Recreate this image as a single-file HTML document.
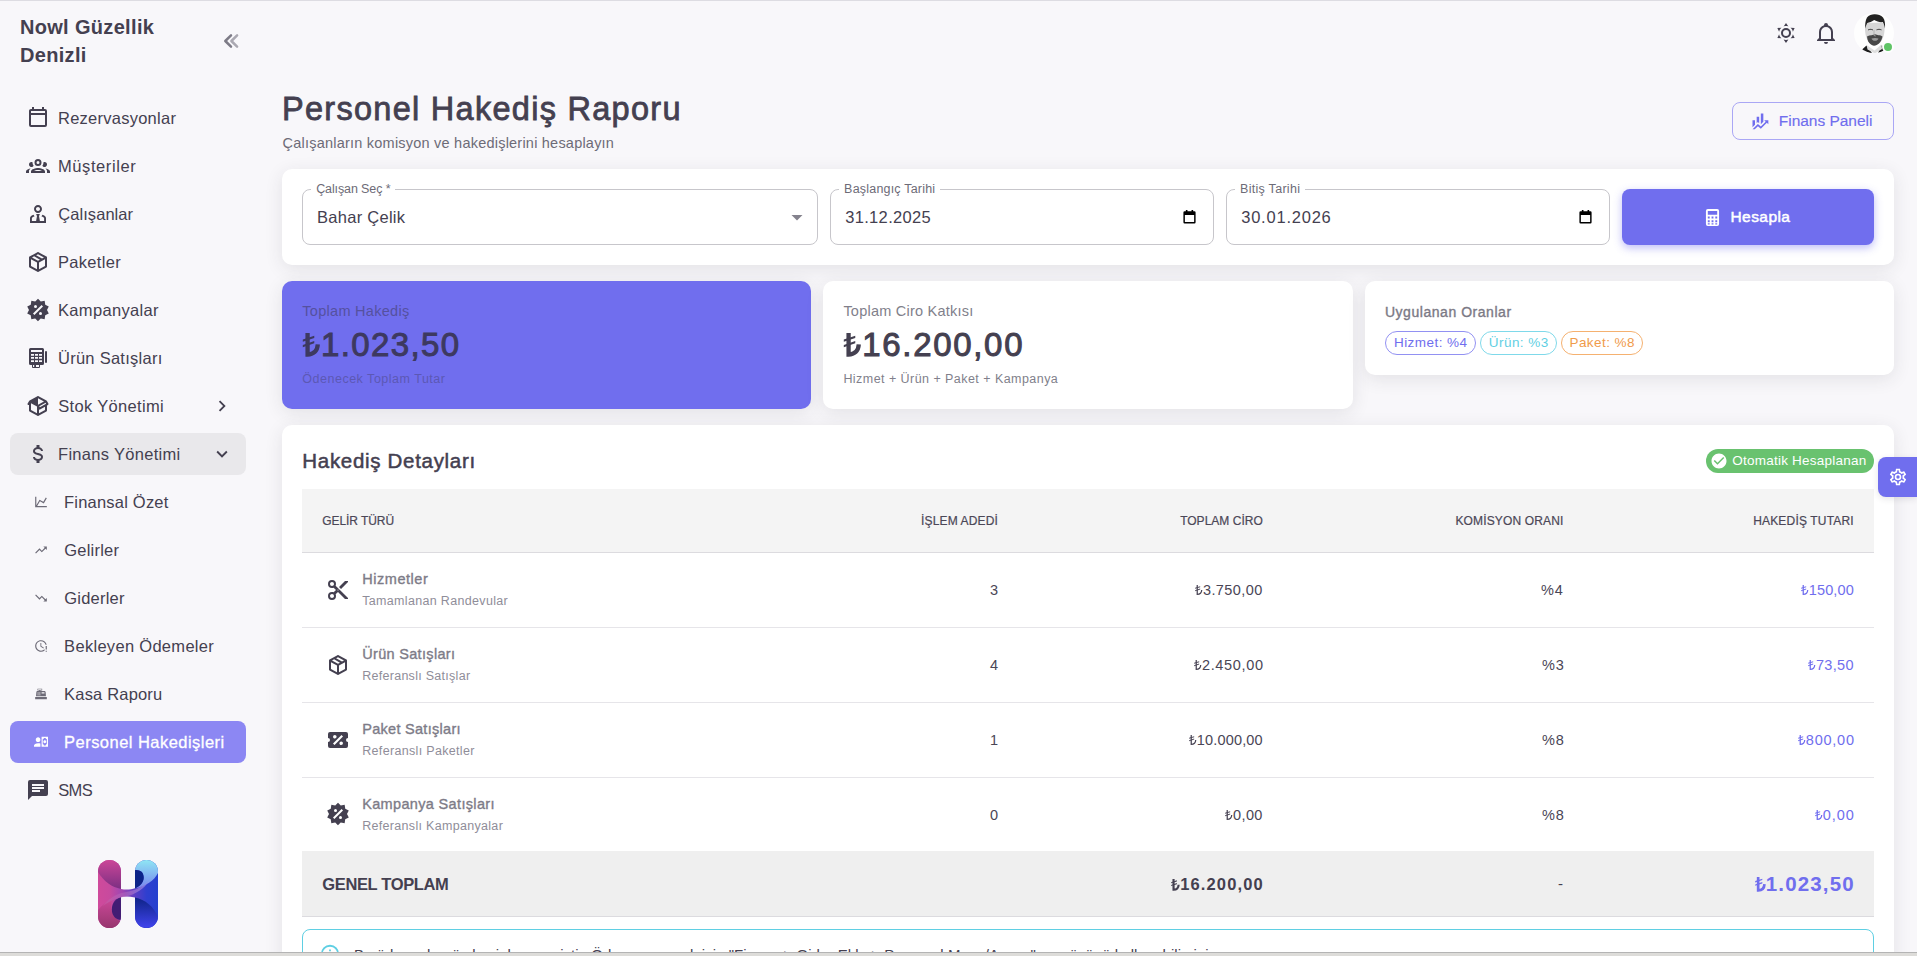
<!DOCTYPE html>
<html lang="tr">
<head>
<meta charset="utf-8">
<title>Personel Hakediş Raporu</title>
<style>
*{box-sizing:border-box;margin:0;padding:0}
html,body{width:1917px;height:956px;overflow:hidden}
body{font-family:"Liberation Sans",sans-serif;background:#f8f7fa;color:#444050;position:relative;font-size:15px}
.abs{position:absolute}
svg{display:block}
.t{position:absolute;white-space:nowrap;line-height:1}
/* top hairline */
#topline{left:0;top:0;width:1917px;height:1px;background:#dddce2}
#botbar{left:0;top:952px;width:1917px;height:4px;background:#dddcd9;border-top:1px solid #b4b4b4}
/* sidebar */
#brand{left:20px;top:13px;font-weight:bold;font-size:20px;line-height:28px;color:#444050;white-space:nowrap}
.mi{position:absolute;left:10px;width:236px;height:42px;border-radius:8px}
.mi .ic{position:absolute;left:16px;top:9px;width:24px;height:24px}
.mi .lb{position:absolute;left:48px;top:0;line-height:42px;font-size:16.5px;color:#444050;white-space:nowrap}
.mi.sub .ic{left:24px;top:14px;width:14px;height:14px}
.mi.sub .lb{left:54px}
.mi.open{background:#e9e8eb}
.mi.act{background:#8c87f3}
.mi.act .lb{color:#fff;-webkit-text-stroke-width:.3px}
.mi .ch{position:absolute;right:12.700px;top:10px;width:22px;height:22px}
/* cards */
.card{position:absolute;background:#fff;border-radius:10px;box-shadow:0 4px 18px rgba(47,43,61,.105)}

/* lira glyph */
.tl{display:inline-block;width:.54em;height:.695em;vertical-align:baseline;stroke-width:9;overflow:visible}
.b .tl{stroke-width:13.500}
.st-v .tl{stroke-width:13.500;width:.57em}
/* header */
#title{left:281.200px;top:90px;font-size:32.500px;-webkit-text-stroke-width:.8px;line-height:38px;color:#444050;white-space:nowrap}
#subtitle{left:282px;top:134px;font-size:14.5px;line-height:18px;color:#6d6b77;white-space:nowrap}
#finbtn{left:1732px;top:102px;width:162px;height:38px;border:1px solid #aaa7f5;border-radius:8px;color:#706eee;font-size:15.5px;-webkit-text-stroke-width:.15px}
#finbtn span{position:absolute;left:46px;top:0;line-height:36px;white-space:nowrap}
/* fields */
.fld{position:absolute;top:189px;height:56px;border:1px solid #c7c6cb;border-radius:8px}
.fld .lab{position:absolute;top:-8px;left:9px;padding:0 5px;background:#fff;font-size:12.5px;line-height:14px;color:#6d6b77;white-space:nowrap}
.fld .val{position:absolute;left:14px;top:0;line-height:54px;font-size:16.5px;color:#444050;white-space:nowrap}
#hesapla{left:1622px;top:189px;width:252px;height:56px;border-radius:8px;background:#706eee;box-shadow:0 3px 8px rgba(112,110,238,.45);color:#fff;-webkit-text-stroke-width:.5px;font-size:15.5px}
#hesapla span{position:absolute;left:108px;top:0;line-height:56px}
/* stat cards */
.st-l{position:absolute;left:20px;top:21px;font-size:14.5px;line-height:18px;white-space:nowrap}
.st-v{position:absolute;left:20px;top:43px;font-size:33px;line-height:42px;-webkit-text-stroke-width:1px;white-space:nowrap}
.st-s{position:absolute;left:20px;top:90px;font-size:12.5px;line-height:16px;white-space:nowrap}
.chip{position:absolute;top:50px;height:24px;border:1px solid;border-radius:12px;font-size:13.5px;line-height:22px;text-align:center;white-space:nowrap;letter-spacing:.45px;text-indent:.45px}

/* details */
#dtitle{left:20px;top:22px;font-size:20.5px;-webkit-text-stroke-width:.5px;line-height:28px;color:#444050;white-space:nowrap}
#auto{left:1424px;top:24px;width:168px;height:24px;border-radius:12px;background:#69c26f;color:#fff;font-size:13.5px;line-height:24px}
#auto span{position:absolute;left:26px;top:0;white-space:nowrap}
#thead{left:20px;top:64px;width:1572px;height:64px;background:#f4f4f4;border-bottom:1px solid #dcdbdf}
.th{position:absolute;top:1px;line-height:63px;font-size:12px;-webkit-text-stroke-width:.2px;color:#4b4757;white-space:nowrap}
.r{right:var(--r)}
.row{position:absolute;left:20px;width:1572px;height:75px;border-bottom:1px solid #e6e5e9}
.row .ic{position:absolute;left:24px;top:25px;width:24px;height:24px}
.row .t1{position:absolute;left:60px;top:16px;font-size:14.5px;line-height:20px;-webkit-text-stroke-width:.35px;color:#7d7b87;white-space:nowrap}
.row .t2{position:absolute;left:60px;top:40px;font-size:12.5px;line-height:16px;color:#8f8d99;white-space:nowrap}
.row .c{position:absolute;top:0;line-height:74px;font-size:14.5px;color:#4a4656;white-space:nowrap}
.row .p{color:#706eee}
#total{left:20px;top:426px;width:1572px;height:66px;background:#efefef;border-bottom:1px solid #dcdbdf}
#total .c{position:absolute;top:1px;line-height:64px;white-space:nowrap;font-weight:bold;color:#444050}
#alert{left:20px;top:504px;width:1572px;height:60px;border:1px solid #5fcfe3;border-radius:8px}
#gear{left:1878px;top:457px;width:39px;height:40px;border-radius:8px 0 0 8px;background:#706eee;box-shadow:0 2px 6px rgba(47,43,61,.12)}
</style>
<style id="tune">
#r3 .ic{top:24px}
/*TUNE*/
#brand{letter-spacing:0.33px;margin-left:-0.1px}
#m0 .lb{letter-spacing:0.25px;margin-left:0.0px}
#m1 .lb{letter-spacing:0.58px;margin-left:0.0px}
#m2 .lb{letter-spacing:0.07px;margin-left:0.2px}
#m3 .lb{letter-spacing:0.31px;margin-left:0.0px}
#m4 .lb{letter-spacing:0.34px;margin-left:0.0px}
#m5 .lb{letter-spacing:0.26px;margin-left:0.0px}
#m6 .lb{letter-spacing:0.33px;margin-left:0.2px}
#m7 .lb{letter-spacing:0.30px;margin-left:0.0px}
#m8 .lb{letter-spacing:0.20px;margin-left:0.1px}
#m9 .lb{letter-spacing:0.20px;margin-left:0.3px}
#m10 .lb{letter-spacing:0.20px;margin-left:0.3px}
#m11 .lb{letter-spacing:0.30px;margin-left:0.1px}
#m12 .lb{letter-spacing:0.18px;margin-left:0.1px}
#m13 .lb{letter-spacing:0.46px;margin-left:0.1px}
#m14 .lb{letter-spacing:-0.60px;margin-left:0.2px}
#title{letter-spacing:1.28px;margin-left:0.8px}
#subtitle{letter-spacing:0.22px;margin-left:0.6px}
#finbtn span{letter-spacing:-0.03px;margin-left:-0.2px}
#f1 .lab{letter-spacing:-0.12px;margin-left:-0.8px}
#f1 .val{letter-spacing:0.26px;margin-left:0.1px}
#f2 .lab{letter-spacing:0.20px;margin-left:-0.9px}
#f2 .val{letter-spacing:0.33px;margin-left:0.2px}
#f3 .lab{letter-spacing:0.29px;margin-left:-1.0px}
#f3 .val{letter-spacing:0.78px;margin-left:0.2px}
#hesapla span{letter-spacing:0.43px;margin-left:0.5px}
#s1 .st-l{letter-spacing:0.29px;margin-left:0.3px}
#s1 .st-v{letter-spacing:1.35px;margin-left:0.3px}
#s1 .st-s{letter-spacing:0.51px;margin-left:0.3px}
#s2 .st-l{letter-spacing:0.23px;margin-left:0.4px}
#s2 .st-v{letter-spacing:1.69px;margin-left:0.4px}
#s2 .st-s{letter-spacing:0.45px;margin-left:0.4px}
#s3 .st-l{letter-spacing:0.54px;margin-left:-0.1px}
#dtitle{letter-spacing:0.69px;margin-left:0.3px}
#auto span{letter-spacing:0.24px;margin-left:0.2px}
#thead .th:nth-of-type(1){letter-spacing:-0.07px;margin-left:0.3px}
#thead .th:nth-of-type(2){letter-spacing:0.14px;margin-right:-0.0px}
#thead .th:nth-of-type(3){letter-spacing:0.02px;margin-right:0.2px}
#thead .th:nth-of-type(4){letter-spacing:0.15px;margin-right:0.5px}
#thead .th:nth-of-type(5){letter-spacing:0.17px;margin-right:0.2px}
#r0 .t1{letter-spacing:0.55px;margin-left:0.2px}
#r0 .t2{letter-spacing:0.33px;margin-left:0.2px}
#r1 .t1{letter-spacing:0.32px;margin-left:0.2px}
#r1 .t2{letter-spacing:0.28px;margin-left:0.2px}
#r2 .t1{letter-spacing:0.29px;margin-left:0.2px}
#r2 .t2{letter-spacing:0.33px;margin-left:0.2px}
#r3 .t1{letter-spacing:0.34px;margin-left:0.2px}
#r3 .t2{letter-spacing:0.31px;margin-left:0.2px}
#r0 span:nth-of-type(4){letter-spacing:0.43px;margin-right:0.2px}
#r1 span:nth-of-type(4){letter-spacing:0.68px;margin-right:-0.8px}
#r2 span:nth-of-type(4){letter-spacing:0.16px;margin-right:0.2px}
#r3 span:nth-of-type(4){letter-spacing:0.40px;margin-right:0.2px}
#r0 span:nth-of-type(5){letter-spacing:0.80px;margin-right:0.5px}
#r1 span:nth-of-type(5){letter-spacing:0.80px;margin-right:-0.5px}
#r2 span:nth-of-type(5){letter-spacing:0.80px;margin-right:-0.5px}
#r3 span:nth-of-type(5){letter-spacing:0.80px;margin-right:-0.5px}
#r0 span:nth-of-type(6){letter-spacing:0.10px;margin-right:0.2px}
#r1 span:nth-of-type(6){letter-spacing:0.32px;margin-right:0.2px}
#r2 span:nth-of-type(6){letter-spacing:0.77px;margin-right:-0.8px}
#r3 span:nth-of-type(6){letter-spacing:0.95px;margin-right:-0.8px}
#total span:nth-of-type(1){letter-spacing:-0.36px;margin-left:0.3px}
#total span:nth-of-type(2){letter-spacing:1.13px;margin-right:-0.8px}
#total span:nth-of-type(4){letter-spacing:1.15px;margin-right:-0.8px}
/*ENDTUNE*/
</style>
</head>
<body>
<div class="abs" id="topline"></div>

<!-- SIDEBAR -->
<div class="abs" id="brand">Nowl Güzellik<br>Denizli</div>
<svg class="abs" id="collapse" style="left:222px;top:32px" width="18" height="18" viewBox="0 0 18 18" fill="none" stroke-width="2.500" stroke-linecap="round" stroke-linejoin="round"><path d="M9 3.400 3.300 9 9 14.600" stroke="#7d7b86"/><path d="M15.100 3.400 9.400 9l5.700 5.600" stroke="#aaa8b1"/></svg>

<div id="menu">
<div class="mi " id="m0" style="top:97px"><svg class="ic" viewBox="0 0 24 24" fill="#444050"><path d="M19,3H18V1H16V3H8V1H6V3H5C3.89,3 3,3.9 3,5V19A2,2 0 0,0 5,21H19A2,2 0 0,0 21,19V5A2,2 0 0,0 19,3M19,19H5V9H19V19M19,7H5V5H19V7Z"/></svg><span class="lb">Rezervasyonlar</span></div>
<div class="mi " id="m1" style="top:145px"><svg class="ic" viewBox="0 0 24 24" fill="#444050"><path d="M12,5A3.5,3.5 0 0,0 8.5,8.5A3.5,3.5 0 0,0 12,12A3.5,3.5 0 0,0 15.5,8.5A3.5,3.5 0 0,0 12,5M12,7A1.5,1.5 0 0,1 13.5,8.5A1.5,1.5 0 0,1 12,10A1.5,1.5 0 0,1 10.5,8.5A1.5,1.5 0 0,1 12,7M5.5,8A2.5,2.5 0 0,0 3,10.5C3,11.44 3.53,12.25 4.29,12.68C4.65,12.88 5.06,13 5.5,13C5.94,13 6.35,12.88 6.71,12.68C7.08,12.47 7.39,12.17 7.62,11.81C6.89,10.86 6.5,9.7 6.5,8.5C6.5,8.41 6.5,8.31 6.5,8.22C6.2,8.08 5.86,8 5.5,8M18.5,8C18.14,8 17.8,8.08 17.5,8.22C17.5,8.31 17.5,8.41 17.5,8.5C17.5,9.7 17.11,10.86 16.38,11.81C16.5,12 16.63,12.15 16.78,12.3C16.94,12.45 17.1,12.58 17.29,12.68C17.65,12.88 18.06,13 18.5,13C18.94,13 19.35,12.88 19.71,12.68C20.47,12.25 21,11.44 21,10.5A2.5,2.5 0 0,0 18.5,8M12,14C9.66,14 5,15.17 5,17.5V19H19V17.5C19,15.17 14.34,14 12,14M4.71,14.55C2.78,14.78 0,15.76 0,17.5V19H3V17.07C3,16.06 3.69,15.22 4.71,14.55M19.29,14.55C20.31,15.22 21,16.06 21,17.07V19H24V17.5C24,15.76 21.22,14.78 19.29,14.55M12,16C13.53,16 15.24,16.5 16.23,17H7.77C8.76,16.5 10.47,16 12,16Z"/></svg><span class="lb">Müşteriler</span></div>
<div class="mi " id="m2" style="top:193px"><svg class="ic" viewBox="0 0 24 24" fill="#444050"><path d="M16.36 12.76C18.31 13.42 20 14.5 20 16V21H4V16C4 14.5 5.69 13.42 7.65 12.76L8.27 14L8.5 14.5C7 14.96 5.9 15.56 5.9 16V19.1H10.12L11 14.03L10.06 12.15C10.68 12.08 11.33 12.03 12 12.03C12.67 12.03 13.32 12.08 13.94 12.15L13 14.03L13.88 19.1H18.1V16C18.1 15.56 17 14.96 15.5 14.5L15.73 14L16.36 12.76M12 5C10.9 5 10 5.9 10 7C10 8.1 10.9 9 12 9C13.1 9 14 8.1 14 7C14 5.9 13.1 5 12 5M12 11C9.79 11 8 9.21 8 7C8 4.79 9.79 3 12 3C14.21 3 16 4.79 16 7C16 9.21 14.21 11 12 11Z"/></svg><span class="lb">Çalışanlar</span></div>
<div class="mi " id="m3" style="top:241px"><svg class="ic" viewBox="0 0 24 24" fill="#444050"><path d="M21,16.5C21,16.88 20.79,17.21 20.47,17.38L12.57,21.82C12.41,21.94 12.21,22 12,22C11.79,22 11.59,21.94 11.43,21.82L3.53,17.38C3.21,17.21 3,16.88 3,16.5V7.5C3,7.12 3.21,6.79 3.53,6.62L11.43,2.18C11.59,2.06 11.79,2 12,2C12.21,2 12.41,2.06 12.57,2.18L20.47,6.62C20.79,6.79 21,7.12 21,7.5V16.5M12,4.15L10.11,5.22L16,8.61L17.96,7.5L12,4.15M6.04,7.5L12,10.85L13.96,9.75L8.08,6.35L6.04,7.5M5,15.91L11,19.29V12.58L5,9.21V15.91M19,15.91V9.21L13,12.58V19.29L19,15.91Z"/></svg><span class="lb">Paketler</span></div>
<div class="mi " id="m4" style="top:289px"><svg class="ic" viewBox="0 0 24 24" fill="#444050"><path d="M18.65,2.85L19.26,6.71L22.77,8.5L21,12L22.78,15.5L19.24,17.29L18.63,21.15L14.74,20.54L11.97,23.3L9.19,20.5L5.33,21.14L4.71,17.25L1.22,15.47L3,11.97L1.23,8.5L4.74,6.69L5.35,2.86L9.22,3.5L12,0.69L14.77,3.46L18.65,2.85M9.5,7A1.5,1.5 0 0,0 8,8.5A1.5,1.5 0 0,0 9.5,10A1.5,1.5 0 0,0 11,8.5A1.5,1.5 0 0,0 9.5,7M14.5,14A1.5,1.5 0 0,0 13,15.5A1.5,1.5 0 0,0 14.5,17A1.5,1.5 0 0,0 16,15.5A1.5,1.5 0 0,0 14.5,14M8.41,17L17,8.41L15.59,7L7,15.59L8.41,17Z"/></svg><span class="lb">Kampanyalar</span></div>
<div class="mi " id="m5" style="top:337px"><svg class="ic" viewBox="0 0 24 24" fill="#444050"><path fill-rule="evenodd" d="M4.500 2H16.500A1.500 1.500 0 0 1 18 3.500V17.500A1.500 1.500 0 0 1 16.500 19H14V21A1 1 0 0 1 13 22H7A1 1 0 0 1 6 21V19H4.500A1.500 1.500 0 0 1 3 17.500V3.500A1.500 1.500 0 0 1 4.500 2ZM5 4H16V6.100H5ZM5 8H8V9.8H5ZM9 8H12V9.8H9ZM13 8H16V9.8H13ZM5 11H8V12.8H5ZM9 11H12V12.8H9ZM13 11H16V12.8H13ZM5 14.2H8V16H5ZM9 14.2H12V16H9ZM13 14.2H16V16H13ZM7 19H8.200V20.900H7ZM10 19H13V20.900H10ZM20 5A1 1 0 0 1 21 6V16A1 1 0 0 1 19 16V6A1 1 0 0 1 20 5Z"/></svg><span class="lb">Ürün Satışları</span></div>
<div class="mi " id="m6" style="top:385px"><svg class="ic" viewBox="0 0 24 24" fill="#444050"><path d="M2,10.96C1.5,10.68 1.35,10.07 1.63,9.59L3.13,7C3.24,6.8 3.41,6.66 3.6,6.58L11.43,2.18C11.59,2.06 11.79,2 12,2C12.21,2 12.41,2.06 12.57,2.18L20.47,6.62C20.66,6.72 20.82,6.88 20.91,7.08L22.36,9.6C22.64,10.08 22.47,10.69 22,10.96L21,11.54V16.5C21,16.88 20.79,17.21 20.47,17.38L12.57,21.82C12.41,21.94 12.21,22 12,22C11.79,22 11.59,21.94 11.43,21.82L3.53,17.38C3.21,17.21 3,16.88 3,16.5V10.96C2.7,11.13 2.32,11.14 2,10.96M12,4.15V10.85L17.96,7.5L12,4.15M5,15.91L11,19.29V12.58L5,9.21V15.91M19,15.91V12.69L14,15.59C13.67,15.77 13.3,15.76 13,15.6V19.29L19,15.91M13.85,13.36L20.13,9.73L19.55,8.72L13.27,12.35L13.85,13.36Z"/></svg><span class="lb">Stok Yönetimi</span><svg class="ch" viewBox="0 0 24 24" fill="#444050"><path d="M8.59,16.58L13.17,12L8.59,7.41L10,6L16,12L10,18L8.59,16.58Z"/></svg></div>
<div class="mi open" id="m7" style="top:433px"><svg class="ic" viewBox="0 0 24 24" fill="#444050"><path d="M7,15H9C9,16.08 10.37,17 12,17C13.63,17 15,16.08 15,15C15,13.9 13.96,13.5 11.76,12.97C9.64,12.44 7,11.78 7,9C7,7.21 8.47,5.69 10.5,5.18V3H13.5V5.18C15.53,5.69 17,7.21 17,9H15C15,7.92 13.63,7 12,7C10.37,7 9,7.92 9,9C9,10.1 10.04,10.5 12.24,11.03C14.36,11.56 17,12.22 17,15C17,16.79 15.53,18.31 13.5,18.82V21H10.5V18.82C8.47,18.31 7,16.79 7,15Z"/></svg><span class="lb">Finans Yönetimi</span><svg class="ch" viewBox="0 0 24 24" fill="#444050"><path d="M7.41,8.58L12,13.17L16.59,8.58L18,10L12,16L6,10L7.41,8.58Z"/></svg></div>
<div class="mi sub" id="m8" style="top:481px"><svg class="ic" viewBox="0 0 24 24" fill="#6d6b77"><path d="M16,11.78L20.24,4.45L21.97,5.45L16.74,14.5L10.23,10.75L5.46,19H22V21H2V3H4V17.54L9.5,8L16,11.78Z"/></svg><span class="lb">Finansal Özet</span></div>
<div class="mi sub" id="m9" style="top:529px"><svg class="ic" viewBox="0 0 24 24" fill="#6d6b77"><path d="M16,6L18.29,8.29L13.41,13.17L9.41,9.17L2,16.59L3.41,18L9.41,12L13.41,16L19.71,9.71L22,12V6H16Z"/></svg><span class="lb">Gelirler</span></div>
<div class="mi sub" id="m10" style="top:577px"><svg class="ic" viewBox="0 0 24 24" fill="#6d6b77"><path d="M16,18L18.29,15.71L13.41,10.83L9.41,14.83L2,7.41L3.41,6L9.41,12L13.41,8L19.71,14.29L22,12V18H16Z"/></svg><span class="lb">Giderler</span></div>
<div class="mi sub" id="m11" style="top:625px"><svg class="ic" viewBox="0 0 24 24" fill="#6d6b77"><path d="M11,7V13L16.2,16.1L17,14.9L12.5,12.2V7H11M20,12V18H22V12H20M20,20V22H22V20H20M18,20C16.3,21.3 14.3,22 12,22C6.5,22 2,17.5 2,12C2,6.5 6.5,2 12,2C16.8,2 20.9,5.4 21.8,10H19.7C18.8,6.6 15.7,4 12,4C7.6,4 4,7.6 4,12C4,16.4 7.6,20 12,20C14.4,20 16.5,18.9 18,17.3V20Z"/></svg><span class="lb">Bekleyen Ödemeler</span></div>
<div class="mi sub" id="m12" style="top:673px"><svg class="ic" viewBox="0 0 24 24" fill="#6d6b77"><path d="M2,17H22V21H2V17M6.25,7H9V6H6V3H14V6H11V7H17.8C18.8,7 19.8,8 20,9L20.5,16H3.5L4.05,9C4.05,8 5.05,7 6.25,7M13,9V11H18V9H13M6,9V10H8V9H6M9,9V10H11V9H9M6,11V12H8V11H6M9,11V12H11V11H9M6,13V14H8V13H6M9,13V14H11V13H9M7,4V5H13V4H7Z"/></svg><span class="lb">Kasa Raporu</span></div>
<div class="mi sub act" id="m13" style="top:721px"><svg class="ic" viewBox="0 0 24 24" fill="#fff"><path d="M11 8C11 10.21 9.21 12 7 12C4.79 12 3 10.21 3 8C3 5.79 4.79 4 7 4C9.21 4 11 5.79 11 8M11 14.72V20H0V18C0 15.79 3.13 14 7 14C8.5 14 9.87 14.27 11 14.72M24 20H13V3H24V20M16 11.5C16 10.12 17.12 9 18.5 9C19.88 9 21 10.12 21 11.5C21 12.88 19.88 14 18.5 14C17.12 14 16 12.88 16 11.5M22 7C20.9 7 20 6.11 20 5H17C17 6.11 16.11 7 15 7V16C16.11 16 17 16.9 17 18H20C20 16.9 20.9 16 22 16V7Z"/></svg><span class="lb">Personel Hakedişleri</span></div>
<div class="mi " id="m14" style="top:769px"><svg class="ic" viewBox="0 0 24 24" fill="#444050"><path d="M20,2H4A2,2 0 0,0 2,4V22L6,18H20A2,2 0 0,0 22,16V4A2,2 0 0,0 20,2M6,9H18V11H6M14,14H6V12H14M18,8H6V6H18"/></svg><span class="lb">SMS</span></div>
</div>

<svg class="abs" id="logo" style="left:98px;top:860px" width="60" height="68" viewBox="0 0 60 68">
<defs>
<linearGradient id="lgL" x1="0" y1="0" x2="1" y2="0"><stop offset="0" stop-color="#cf4a9b"/><stop offset=".5" stop-color="#c84a9e"/><stop offset="1" stop-color="#a247b2"/></linearGradient>
<linearGradient id="lgL2" x1="0" y1="0" x2="0" y2="1"><stop offset="0" stop-color="#cb4698"/><stop offset="1" stop-color="#7b2f82"/></linearGradient>
<linearGradient id="lgL3" x1="0" y1="0" x2="0" y2="1"><stop offset="0" stop-color="#cb4899"/><stop offset="1" stop-color="#97366e"/></linearGradient>
<linearGradient id="lgR" x1="0" y1="0" x2="1" y2="0"><stop offset="0" stop-color="#5a3fc4"/><stop offset=".5" stop-color="#2f3fcf"/><stop offset="1" stop-color="#2440cf"/></linearGradient>
<linearGradient id="lgR2" x1="0" y1="0" x2="0" y2="1"><stop offset="0" stop-color="#8fe6f4"/><stop offset="1" stop-color="#7785ee"/></linearGradient>
<linearGradient id="lgR3" x1="0" y1="0" x2="0" y2="1"><stop offset="0" stop-color="#0d2386"/><stop offset="1" stop-color="#4043ec"/></linearGradient>
<linearGradient id="lgX" x1="0" y1="0" x2="1" y2="0"><stop offset="0" stop-color="#a847b0"/><stop offset="1" stop-color="#5a3fc4"/></linearGradient>
<linearGradient id="lgRib" x1="0" y1="0" x2="1" y2="0"><stop offset="0" stop-color="#c95aa2"/><stop offset=".5" stop-color="#a860bd"/><stop offset="1" stop-color="#8b92ee"/></linearGradient>
<clipPath id="cpL"><rect x="0" y="0" width="23" height="68" rx="11.500"/></clipPath>
<clipPath id="cpR"><rect x="37" y="0" width="23" height="68" rx="11.500"/></clipPath>
</defs>
<g clip-path="url(#cpL)"><rect x="0" y="0" width="23" height="68" fill="url(#lgL)"/><path d="M0 12C6 22 14 27 23 29V0H0z" fill="url(#lgL2)"/><path d="M0 50c4-5 9-9 14-11-1 4-1 9 0 13 2 5 5 8 9 9v7H0z" fill="url(#lgL3)"/><path d="M23 37c-7 2-10 8-9 15 1 5 5 8 9 8z" fill="#421d74"/></g>
<g clip-path="url(#cpR)"><rect x="37" y="0" width="23" height="68" fill="url(#lgR)"/><path d="M37 10V0h23v13c-4 8-12 13-23 15.500 8-4 10-9.500 8-14.500-1-3-4-4-8-4z" fill="url(#lgR2)"/><path d="M37 10c4 0 7 1 8 4 2 5 0 11-8 14.500z" fill="#0c2388"/><path d="M37 37.500c10 2 19 9 23 20v10H37z" fill="url(#lgR3)"/></g>
<path d="M23 29c5 1 10 .600 14-.700v9.200c-5-1-10-1.200-14-.500z" fill="url(#lgX)"/>
<path d="M5 46c5-7 12-11.500 21-13.500 9-1.500 18-5 25-11.500-5 8-13 13-23 15.500-9 1.500-16 4-23 9.500z" fill="url(#lgRib)" opacity=".75"/>
</svg>

<!-- MAIN -->
<svg width="0" height="0" style="position:absolute"><defs><g id="lira"><path d="M15 0V67.500C33 67.500 46 57 47 36" fill="none" stroke="currentColor"/><path d="M0 20.500 36 8.500V15.500L0 27.500zM0 37.500 36 25.500V32.500L0 44.500z" fill="currentColor" stroke="none"/></g></defs></svg>
<div id="main">
<!-- header icons -->
<svg class="abs" id="sun" style="left:1774px;top:21px" width="24" height="24" viewBox="0 0 24 24" fill="#444050"><path d="M12,7A5,5 0 0,1 17,12A5,5 0 0,1 12,17A5,5 0 0,1 7,12A5,5 0 0,1 12,7M12,9A3,3 0 0,0 9,12A3,3 0 0,0 12,15A3,3 0 0,0 15,12A3,3 0 0,0 12,9M12,2L14.39,5.42C13.65,5.15 12.84,5 12,5C11.16,5 10.35,5.15 9.61,5.42L12,2M3.34,7L7.5,6.65C6.9,7.16 6.36,7.78 5.94,8.5C5.5,9.24 5.25,10 5.11,10.79L3.34,7M3.36,17L5.12,13.23C5.26,14 5.53,14.78 5.95,15.5C6.37,16.24 6.91,16.86 7.5,17.37L3.36,17M20.65,7L18.88,10.79C18.74,10 18.47,9.23 18.05,8.5C17.63,7.78 17.1,7.15 16.5,6.64L20.65,7M20.64,17L16.5,17.36C17.09,16.85 17.62,16.22 18.04,15.5C18.46,14.77 18.73,14 18.87,13.21L20.64,17M12,22L9.59,18.56C10.33,18.83 11.14,19 12,19C12.82,19 13.63,18.83 14.37,18.56L12,22Z"/></svg>
<svg class="abs" id="bell" style="left:1814px;top:21px" width="24" height="24" viewBox="0 0 24 24" fill="#444050"><path d="M10,21H14A2,2 0 0,1 12,23A2,2 0 0,1 10,21M21,19V20H3V19L5,17V11C5,7.9 7.03,5.17 10,4.29C10,4.19 10,4.1 10,4A2,2 0 0,1 12,2A2,2 0 0,1 14,4C14,4.1 14,4.19 14,4.29C16.97,5.17 19,7.9 19,11V17L21,19M17,11A5,5 0 0,0 12,6A5,5 0 0,0 7,11V18H17V11Z"/></svg>
<svg class="abs" id="avatar" style="left:1854px;top:13px" width="40" height="40" viewBox="0 0 40 40"><defs><clipPath id="avc"><circle cx="20" cy="20" r="20"/></clipPath><filter id="avb" x="-10%" y="-10%" width="120%" height="120%"><feGaussianBlur stdDeviation=".45"/></filter></defs><g clip-path="url(#avc)"><rect width="40" height="40" fill="#fefefe"/><g filter="url(#avb)">
<path d="M7 37.500 12.500 32.500 18 40H7zM29.300 33 29.800 38.500 24 40.500 27 32.500z" fill="#1c1c1c"/>
<path d="M12.500 32 20.500 37.500 27.500 31.500 28 36 21 40.500 13.500 36.500z" fill="#dedede"/>
<path d="M11.500 10C11 13 10.800 16 11.200 19c.300 3 1 5.500 2.300 8 1.500 2.500 3.500 4.500 6.500 5.500 3-.300 6-2 8-5.500 1.500-3 2.300-6 2.500-9.500.200-3 0-5.500-.500-8z" fill="#d6d6d6"/>
<path d="M13 23.500c1.500-.800 3-1.300 4.500-1.300l3.500-1 3.500 1c1.500 0 3 .500 4 1.300-.500 2.500-1.500 5-3.500 7-1.500 1.300-3 2-5 2.200-2.500-.500-4.500-2-5.800-4.200-.700-1.500-1-3.300-1.200-5z" fill="#474747"/>
<path d="M17.500 25.500c2-.700 5-.700 7 0-.500 1.500-2 2.300-3.500 2.300s-3-.800-3.500-2.300z" fill="#9a9a9a"/>
<path d="M14 16.300c1.500-.900 3.500-.900 5 0v1.200c-1.500-.600-3.500-.600-5 0zM22.500 16.300c1.500-.900 3.500-.900 5 0v1.200c-1.500-.600-3.500-.600-5 0z" fill="#5a5a5a"/>
<path d="M20 17v5.500l1.800.500" fill="none" stroke="#aaa" stroke-width=".8"/>
<path d="M11.300 15.500C11 11 11.500 7 13 4.500 15 2 18 1.200 21 1.300c3 .200 6 1 8 3.200 1.800 2.200 2.300 6 2 11-.500-2.500-1-5-2.300-6.500-2.500.500-6-.500-8.500-2-2 1.500-5 2.500-7 3-.800 1.500-1.400 3.500-1.900 5.500z" fill="#222"/>
</g></g></svg>
<div class="abs" style="left:1882px;top:41px;width:12px;height:12px;border-radius:50%;background:#5fc466;border:2px solid #fdfdfe"></div>

<div class="abs" id="title">Personel Hakediş Raporu</div>
<div class="abs" id="subtitle">Çalışanların komisyon ve hakedişlerini hesaplayın</div>
<div class="abs" id="finbtn"><svg class="abs" style="left:16.500px;top:8px" width="20" height="20" viewBox="0 0 24 24" fill="#706eee"><path d="M6,16.5L3,19.44V11H6M11,14.66L9.43,13.32L8,14.64V7H11M16,13L13,16V3H16M18.81,12.81L17,11H22V16L20.21,14.21L13,21.36L9.53,18.34L5.75,22H3L9.47,15.66L13,18.64"/></svg><span>Finans Paneli</span></div>

<!-- filter card -->
<div class="card" id="fcard" style="left:282px;top:169px;width:1612px;height:96px"></div>
<div class="fld" id="f1" style="left:302px;width:516px"><span class="lab">Çalışan Seç *</span><span class="val">Bahar Çelik</span><svg class="abs" style="right:14px;top:24.800px" width="12" height="6" viewBox="0 0 12 6" fill="#84828d"><path d="M0.500 0h11L6 5.500z"/></svg></div>
<div class="fld" id="f2" style="left:830px;width:384px"><span class="lab">Başlangıç Tarihi</span><span class="val">31.12.2025</span><svg class="abs cali" style="right:17.200px;top:19.500px" width="13" height="14" viewBox="0 0 16 17" fill="#000"><path d="M3.500 0h2v1.500h5V0h2v1.500H14a1.500 1.500 0 0 1 1.500 1.500v12A1.500 1.500 0 0 1 14 16.500H2A1.500 1.500 0 0 1 .500 15V3A1.500 1.500 0 0 1 2 1.500h1.500zM2.300 6v8.700h11.400V6z"/></svg></div>
<div class="fld" id="f3" style="left:1226px;width:384px"><span class="lab">Bitiş Tarihi</span><span class="val">30.01.2026</span><svg class="abs cali" style="right:17.200px;top:19.500px" width="13" height="14" viewBox="0 0 16 17" fill="#000"><path d="M3.500 0h2v1.500h5V0h2v1.500H14a1.500 1.500 0 0 1 1.500 1.500v12A1.500 1.500 0 0 1 14 16.500H2A1.500 1.500 0 0 1 .500 15V3A1.500 1.500 0 0 1 2 1.500h1.500zM2.300 6v8.700h11.400V6z"/></svg></div>
<div class="abs" id="hesapla"><svg class="abs" style="left:82.500px;top:19.500px" width="15" height="17" viewBox="0 0 16 18" fill="#fff"><path d="M3 0h10a2 2 0 0 1 2 2v14a2 2 0 0 1-2 2H3a2 2 0 0 1-2-2V2a2 2 0 0 1 2-2m0 2v4h10V2zm0 6v2h2V8zm4 0v2h2V8zm4 0v2h2V8zm-8 4v2h2v-2zm4 0v2h2v-2zm4 0v2h2v-2zm-8 3.200V16.500h2v-1.300zm4 0v1.300h2v-1.300zm4 0v1.300h2v-1.300z"/></svg><span>Hesapla</span></div>

<!-- stat cards -->
<div class="card" id="s1" style="left:282px;top:281px;width:529px;height:128px;background:#706eee"><div class="st-l" style="color:#55519f">Toplam Hakediş</div><div class="st-v" style="color:#3d3960"><svg class="tl" viewBox="0 0 54 72"><use href="#lira"/></svg>1.023,50</div><div class="st-s" style="color:#5c58b4">Ödenecek Toplam Tutar</div></div>
<div class="card" id="s2" style="left:823px;top:281px;width:530px;height:128px"><div class="st-l" style="color:#817f8b">Toplam Ciro Katkısı</div><div class="st-v" style="color:#444050"><svg class="tl" viewBox="0 0 54 72"><use href="#lira"/></svg>16.200,00</div><div class="st-s" style="color:#817f8b">Hizmet + Ürün + Paket + Kampanya</div></div>
<div class="card" id="s3" style="left:1365px;top:281px;width:529px;height:94px"><div class="st-l" style="color:#7b7985;-webkit-text-stroke-width:.35px;font-size:14px;top:22px">Uygulanan Oranlar</div>
<div class="chip" style="left:20px;width:91px;color:#706eee;border-color:#9291f2">Hizmet: %4</div>
<div class="chip" style="left:115px;width:77px;color:#5fcfe3;border-color:#7fd9ea">Ürün: %3</div>
<div class="chip" style="left:196px;width:82px;color:#f09b4b;border-color:#f5b170">Paket: %8</div>
</div>
<!-- details card -->
<div class="card" id="dcard" style="left:282px;top:425px;width:1612px;height:600px">
<div class="abs" id="dtitle">Hakediş Detayları</div>
<div class="abs" id="auto"><svg class="abs" style="left:4px;top:3px" width="18" height="18" viewBox="0 0 24 24" fill="#fff"><path d="M12 2C6.500 2 2 6.500 2 12S6.500 22 12 22 22 17.500 22 12 17.500 2 12 2M10 17L5 12L6.410 10.590L10 14.170L17.590 6.580L19 8L10 17Z"/></svg><span>Otomatik Hesaplanan</span></div>
<div class="abs" id="thead"><span class="th" style="left:20px">GELİR TÜRÜ</span><span class="th" style="right:876px">İŞLEM ADEDİ</span><span class="th" style="right:611px">TOPLAM CİRO</span><span class="th" style="right:310px">KOMİSYON ORANI</span><span class="th" style="right:20px">HAKEDİŞ TUTARI</span></div>
<div class="row" id="r0" style="top:128px"><svg class="ic" viewBox="0 0 24 24" fill="#444050"><path d="M19,3L13,9L15,11L22,4V3M12,12.5A0.5,0.5 0 0,1 11.5,12A0.5,0.5 0 0,1 12,11.5A0.5,0.5 0 0,1 12.5,12A0.5,0.5 0 0,1 12,12.5M6,20A2,2 0 0,1 4,18C4,16.89 4.9,16 6,16A2,2 0 0,1 8,18C8,19.11 7.1,20 6,20M6,8A2,2 0 0,1 4,6C4,4.89 4.9,4 6,4A2,2 0 0,1 8,6C8,7.11 7.1,8 6,8M9.64,7.64C9.87,7.14 10,6.59 10,6A4,4 0 0,0 6,2A4,4 0 0,0 2,6A4,4 0 0,0 6,10C6.59,10 7.14,9.87 7.64,9.64L10,12L7.64,14.36C7.14,14.13 6.59,14 6,14A4,4 0 0,0 2,18A4,4 0 0,0 6,22A4,4 0 0,0 10,18C10,17.41 9.87,16.86 9.64,16.36L12,14L19,21H22V20L9.64,7.640Z"/></svg><span class="t1">Hizmetler</span><span class="t2">Tamamlanan Randevular</span><span class="c" style="right:876px">3</span><span class="c" style="right:611px"><svg class="tl" viewBox="0 0 54 72"><use href="#lira"/></svg>3.750,00</span><span class="c" style="right:310px">%4</span><span class="c p" style="right:20px"><svg class="tl" viewBox="0 0 54 72"><use href="#lira"/></svg>150,00</span></div>
<div class="row" id="r1" style="top:203px"><svg class="ic" viewBox="0 0 24 24" fill="#444050"><path d="M21,16.5C21,16.88 20.79,17.21 20.47,17.38L12.57,21.82C12.41,21.94 12.21,22 12,22C11.79,22 11.59,21.94 11.43,21.82L3.53,17.38C3.21,17.21 3,16.88 3,16.5V7.5C3,7.12 3.21,6.79 3.53,6.62L11.43,2.18C11.59,2.06 11.79,2 12,2C12.21,2 12.41,2.06 12.57,2.18L20.47,6.62C20.79,6.79 21,7.12 21,7.5V16.5M12,4.15L10.11,5.22L16,8.61L17.96,7.5L12,4.15M6.04,7.5L12,10.85L13.96,9.75L8.08,6.35L6.04,7.5M5,15.91L11,19.29V12.58L5,9.21V15.91M19,15.91V9.21L13,12.58V19.29L19,15.91Z"/></svg><span class="t1">Ürün Satışları</span><span class="t2">Referanslı Satışlar</span><span class="c" style="right:876px">4</span><span class="c" style="right:611px"><svg class="tl" viewBox="0 0 54 72"><use href="#lira"/></svg>2.450,00</span><span class="c" style="right:310px">%3</span><span class="c p" style="right:20px"><svg class="tl" viewBox="0 0 54 72"><use href="#lira"/></svg>73,50</span></div>
<div class="row" id="r2" style="top:278px"><svg class="ic" viewBox="0 0 24 24" fill="#444050"><path d="M4,4A2,2 0 0,0 2,6V10A2,2 0 0,1 4,12A2,2 0 0,1 2,14V18A2,2 0 0,0 4,20H20A2,2 0 0,0 22,18V14A2,2 0 0,1 20,12A2,2 0 0,1 22,10V6A2,2 0 0,0 20,4H4M15.5,7L17,8.5L8.5,17L7,15.5L15.5,7M8.81,7.04C9.79,7.04 10.58,7.83 10.58,8.81A1.77,1.77 0 0,1 8.810,10.58C7.83,10.58 7.04,9.79 7.04,8.81A1.77,1.77 0 0,1 8.810,7.04M15.19,13.42C16.17,13.42 16.96,14.21 16.96,15.19A1.77,1.77 0 0,1 15.19,16.96C14.21,16.96 13.42,16.17 13.42,15.19A1.77,1.77 0 0,1 15.19,13.420Z"/></svg><span class="t1">Paket Satışları</span><span class="t2">Referanslı Paketler</span><span class="c" style="right:876px">1</span><span class="c" style="right:611px"><svg class="tl" viewBox="0 0 54 72"><use href="#lira"/></svg>10.000,00</span><span class="c" style="right:310px">%8</span><span class="c p" style="right:20px"><svg class="tl" viewBox="0 0 54 72"><use href="#lira"/></svg>800,00</span></div>
<div class="row" id="r3" style="top:353px"><svg class="ic" viewBox="0 0 24 24" fill="#444050"><path d="M18.65,2.85L19.26,6.71L22.77,8.5L21,12L22.78,15.5L19.24,17.29L18.63,21.15L14.74,20.54L11.97,23.3L9.19,20.5L5.33,21.14L4.71,17.25L1.22,15.47L3,11.97L1.23,8.5L4.74,6.69L5.35,2.86L9.22,3.5L12,0.69L14.77,3.46L18.65,2.85M9.5,7A1.5,1.5 0 0,0 8,8.5A1.5,1.5 0 0,0 9.5,10A1.5,1.5 0 0,0 11,8.5A1.5,1.5 0 0,0 9.5,7M14.5,14A1.5,1.5 0 0,0 13,15.5A1.5,1.5 0 0,0 14.5,17A1.5,1.5 0 0,0 16,15.5A1.5,1.5 0 0,0 14.5,14M8.41,17L17,8.41L15.59,7L7,15.59L8.41,17Z"/></svg><span class="t1">Kampanya Satışları</span><span class="t2">Referanslı Kampanyalar</span><span class="c" style="right:876px">0</span><span class="c" style="right:611px"><svg class="tl" viewBox="0 0 54 72"><use href="#lira"/></svg>0,00</span><span class="c" style="right:310px">%8</span><span class="c p" style="right:20px"><svg class="tl" viewBox="0 0 54 72"><use href="#lira"/></svg>0,00</span></div>
<div class="abs b" id="total"><span class="c" style="left:20px;font-size:16.5px">GENEL TOPLAM</span><span class="c" style="right:611px;font-size:16.5px"><svg class="tl" viewBox="0 0 54 72"><use href="#lira"/></svg>16.200,00</span><span class="c" style="right:311px;font-size:15px;font-weight:normal">-</span><span class="c" style="right:20px;font-size:20.5px;color:#706eee"><svg class="tl" viewBox="0 0 54 72"><use href="#lira"/></svg>1.023,50</span></div>
<div class="abs" id="alert"><svg class="abs" style="left:16px;top:13px" width="22" height="22" viewBox="0 0 24 24" fill="#5fcfe3"><path d="M11,9H13V7H11M12,20C7.59,20 4,16.41 4,12C4,7.59 7.59,4 12,4C16.41,4 20,7.59 20,12C20,16.41 16.41,20 12,20M12,2A10,10 0 0,0 2,12A10,10 0 0,0 12,22A10,10 0 0,0 22,12A10,10 0 0,0 12,2M11,17H13V11H11V17Z"/></svg><span class="t" style="left:51px;top:17px;font-size:15px;letter-spacing:.04px;color:#444050">Bu ödeme henüz kesinleşmemiştir. Ödeme yapmak için "Finans > Gider Ekle > Personel Maaş/Avans" menüsünü kullanabilirsiniz.</span></div>
</div>
<div class="abs" id="gear"><svg class="abs" style="left:10px;top:10px" width="20" height="20" viewBox="0 0 24 24" fill="#fff"><path d="M12,8A4,4 0 0,1 16,12A4,4 0 0,1 12,16A4,4 0 0,1 8,12A4,4 0 0,1 12,8M12,10A2,2 0 0,0 10,12A2,2 0 0,0 12,14A2,2 0 0,0 14,12A2,2 0 0,0 12,10M10,22C9.75,22 9.54,21.82 9.5,21.58L9.13,18.93C8.5,18.68 7.96,18.34 7.44,17.94L4.95,18.95C4.73,19.03 4.46,18.95 4.34,18.73L2.34,15.27C2.21,15.05 2.27,14.78 2.46,14.63L4.57,12.97L4.5,12L4.57,11L2.46,9.37C2.27,9.22 2.21,8.95 2.34,8.73L4.34,5.27C4.46,5.05 4.73,4.96 4.95,5.05L7.44,6.05C7.96,5.66 8.5,5.32 9.13,5.07L9.5,2.42C9.54,2.18 9.75,2 10,2H14C14.25,2 14.46,2.18 14.5,2.42L14.87,5.07C15.5,5.32 16.04,5.66 16.56,6.05L19.05,5.05C19.27,4.96 19.54,5.05 19.66,5.27L21.66,8.73C21.79,8.95 21.73,9.22 21.54,9.37L19.43,11L19.5,12L19.43,13L21.54,14.63C21.73,14.78 21.79,15.05 21.66,15.27L19.66,18.73C19.54,18.95 19.27,19.04 19.05,18.95L16.56,17.95C16.04,18.34 15.5,18.68 14.87,18.93L14.5,21.58C14.46,21.82 14.25,22 14,22H10M11.25,4L10.88,6.61C9.68,6.86 8.62,7.5 7.85,8.39L5.44,7.35L4.69,8.65L6.8,10.2C6.4,11.37 6.4,12.64 6.8,13.8L4.68,15.36L5.43,16.66L7.86,15.62C8.63,16.5 9.68,17.14 10.87,17.38L11.24,20H12.76L13.13,17.39C14.32,17.14 15.37,16.5 16.14,15.62L18.57,16.66L19.32,15.36L17.2,13.81C17.6,12.64 17.6,11.37 17.2,10.2L19.31,8.65L18.56,7.35L16.15,8.39C15.38,7.5 14.32,6.86 13.12,6.62L12.75,4H11.25Z"/></svg></div>
</div>

<div class="abs" id="botbar"></div>
</body>
</html>
